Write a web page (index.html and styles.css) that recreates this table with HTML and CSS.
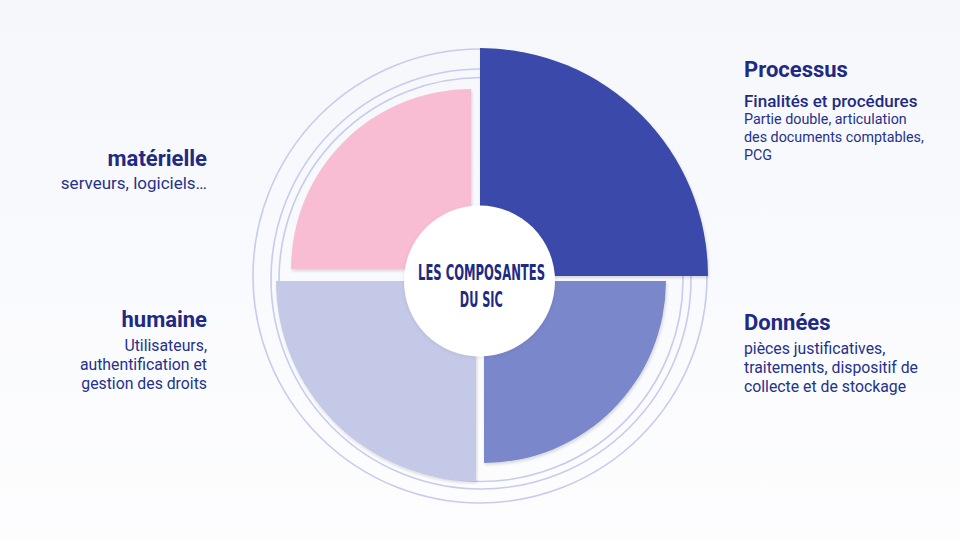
FILE: index.html
```html
<!DOCTYPE html>
<html lang="fr">
<head>
<meta charset="utf-8">
<title>Les composantes du SIC</title>
<link rel="stylesheet" href="styles.css">
</head>
<body>
<main class="slide">
  <section class="col col-left">
    <div class="item item-materielle">
      <h2 class="item-title">matérielle</h2>
      <p class="item-text item-text-lg">serveurs, logiciels…</p>
    </div>
    <div class="item item-humaine">
      <h2 class="item-title">humaine</h2>
      <p class="item-text">Utilisateurs,<br>authentification et<br>gestion des droits</p>
    </div>
  </section>

  <section class="col col-center">
    <svg class="wheel" width="460" height="470" viewBox="0 0 460 470" xmlns="http://www.w3.org/2000/svg">
      <defs>
        <filter id="sh" x="-10%" y="-10%" width="125%" height="125%">
          <feDropShadow dx="1" dy="2" stdDeviation="1.6" flood-color="#000" flood-opacity="0.14"/>
        </filter>
        <filter id="shc" x="-20%" y="-20%" width="140%" height="140%">
          <feDropShadow dx="0" dy="1" stdDeviation="2" flood-color="#000" flood-opacity="0.08"/>
        </filter>
      </defs>
      <g class="rings">
        <circle cx="230" cy="236" r="227"/>
        <circle cx="231" cy="239" r="210"/>
        <circle cx="231" cy="239.5" r="202"/>
      </g>
      <path class="q q-pink" filter="url(#sh)" d="M221,229 H41 A180,180 0 0 1 221,49 Z"/>
      <path class="q q-lav" filter="url(#sh)" d="M226,241 V441 A200,200 0 0 1 26,241 Z"/>
      <path class="q q-mid" filter="url(#sh)" d="M234,241 H416 A182,182 0 0 1 234,423 Z"/>
      <path class="q q-dark" filter="url(#sh)" d="M230,236 V8 A228,228 0 0 1 458,236 Z"/>
      <circle class="hub" filter="url(#shc)" cx="229.5" cy="241" r="75.5"/>
      <text class="hub-text" x="231.5" y="240" text-anchor="middle" textLength="127" lengthAdjust="spacingAndGlyphs">LES COMPOSANTES</text>
      <text class="hub-text" x="231.3" y="267" text-anchor="middle" textLength="43" lengthAdjust="spacingAndGlyphs">DU SIC</text>
    </svg>
  </section>

  <section class="col col-right">
    <div class="item item-processus">
      <h2 class="item-title">Processus</h2>
      <h3 class="item-sub">Finalités et procédures</h3>
      <p class="item-text item-text-sm">Partie double, articulation<br>des documents comptables,<br>PCG</p>
    </div>
    <div class="item item-donnees">
      <h2 class="item-title">Données</h2>
      <p class="item-text">pièces justificatives,<br>traitements, dispositif de<br>collecte et de stockage</p>
    </div>
  </section>
</main>
</body>
</html>
```

FILE: styles.css
```css
* { box-sizing: border-box; }
html, body { margin: 0; padding: 0; }
body {
  font-family: Roboto, "Liberation Sans", Arial, sans-serif;
  color: #1f2983;
}
.slide {
  width: 960px;
  height: 540px;
  overflow: hidden;
  display: grid;
  grid-template-columns: 250px 460px 250px;
  background: linear-gradient(180deg, #f6f7fb 0%, #f9fafd 50%, #fdfdfe 100%);
}
.col { display: flex; flex-direction: column; }
.col-left { text-align: right; padding-right: 43px; padding-top: 146px; }
.col-right { padding-left: 34px; padding-top: 57px; }
.col-center { padding-top: 40px; }

.item-title {
  margin: 0;
  font-size: 22px;
  line-height: 26px;
  font-weight: 700;
  color: #1e2a84;
}
.item-sub {
  margin: 8px 0 0;
  font-size: 17px;
  line-height: 20px;
  font-weight: 500;
  color: #1e2a84;
}
.item-text {
  margin: 3px 0 0;
  font-size: 15.8px;
  line-height: 19px;
  font-weight: 400;
  color: #25318c;
}
.item-text-sm {
  margin-top: 0;
  font-size: 14.3px;
  line-height: 17.8px;
}
.item-text-lg {
  margin-top: 1px;
  font-size: 17px;
  line-height: 20px;
}
.item-humaine { margin-top: 114px; }
.item-donnees { margin-top: 146px; }

.wheel { display: block; overflow: visible; }
.rings circle { fill: none; stroke: #c7cbee; stroke-width: 1.6; }
.q-dark { fill: #3a4aab; }
.q-pink { fill: #f8bdd2; }
.q-lav { fill: #c5c9e8; }
.q-mid { fill: #7a87cb; }
.hub { fill: #ffffff; }
.hub-text {
  font-family: "DejaVu Sans Condensed", "DejaVu Sans", sans-serif;
  font-stretch: condensed;
  font-weight: 700;
  font-size: 20.5px;
  fill: #1e2a84;
}
```
